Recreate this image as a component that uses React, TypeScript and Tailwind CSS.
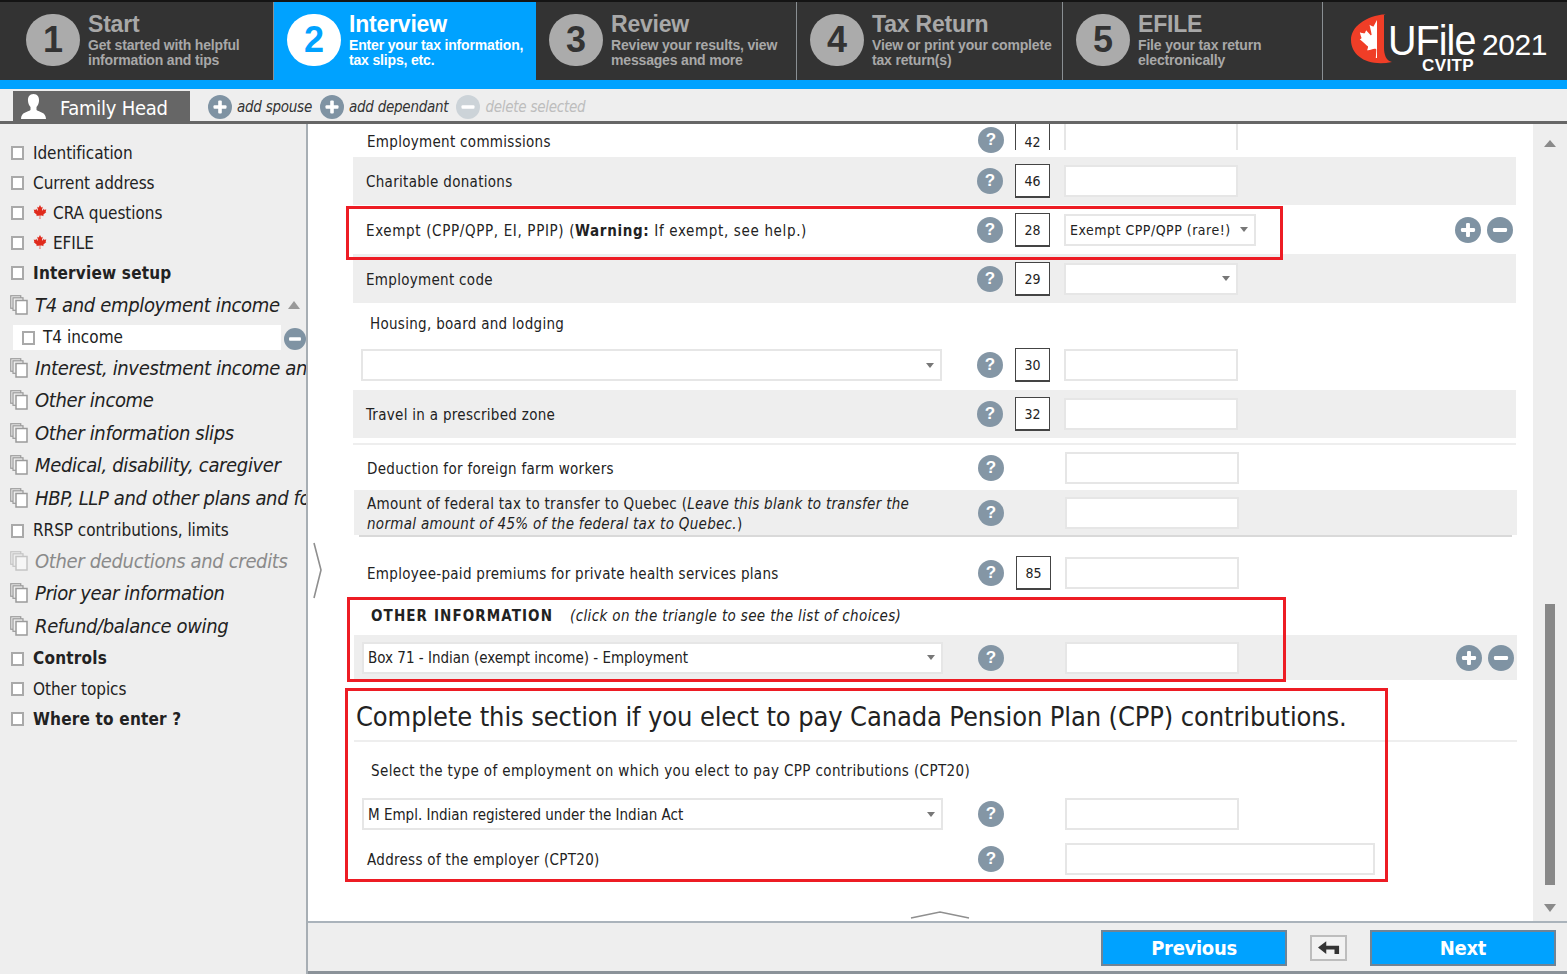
import React from "react";
import { FaCanadianMapleLeaf } from "react-icons/fa";

const FONT = "font-['DejaVu_Sans',sans-serif] [font-stretch:condensed]";

function Help() {
  return (
    <div className="w-[26px] h-[26px] shrink-0 rounded-full bg-[#8496a5] flex items-center justify-center text-white font-bold text-[17px] font-['Liberation_Sans',sans-serif]">
      ?
    </div>
  );
}

function Round({ kind, light, size = "w-[24px] h-[24px]" }: { kind: "plus" | "minus"; light?: boolean; size?: string }) {
  return (
    <svg viewBox="0 0 24 24" className={size + " shrink-0"}>
      <circle cx="12" cy="12" r="12" fill={light ? "#ccd3d8" : "#7f93a3"} />
      <rect x="5.5" y="10.2" width="13" height="3.6" rx="1" fill="#fff" />
      {kind === "plus" && <rect x="10.2" y="5.5" width="3.6" height="13" rx="1" fill="#fff" />}
    </svg>
  );
}

function Caret() {
  return (
    <svg width="8" height="5" viewBox="0 0 8 5" className="shrink-0">
      <path d="M0 0H8L4 5Z" fill="#777" />
    </svg>
  );
}

function Code({ v }: { v: string }) {
  return (
    <div className="w-[35px] h-[34px] shrink-0 bg-white border border-[#444] border-b-2 flex items-center justify-center pt-[2px] text-[14px] text-[#222]">
      {v}
    </div>
  );
}

function Input({ wide }: { wide?: boolean }) {
  return <div className={(wide ? "w-[310px]" : "w-[174px]") + " h-[32px] shrink-0 bg-white border-2 border-[#e6e6e6]"} />;
}

function Select({ text, w, small }: { text?: string; w: string; small?: boolean }) {
  return (
    <div className={w + " h-[32px] shrink-0 bg-white border-2 border-[#e6e6e6] flex items-center justify-between pl-[4px] pr-[6px] whitespace-nowrap text-[#222] " + (small ? "text-[14px] tracking-[0.5px]" : "text-[15px]")}>
      <span className="pt-[2px]">{text}</span>
      <Caret />
    </div>
  );
}

function Row({
  h,
  gray,
  label,
  code,
  field,
  icons,
  track = "tracking-[0.3px]",
}: {
  h: string;
  gray?: boolean;
  label: React.ReactNode;
  code?: string;
  field?: React.ReactNode;
  icons?: boolean;
  track?: string;
}) {
  return (
    <div className={h + " flex items-center " + (gray ? "bg-[#eeeeee]" : "")}>
      <div className={"w-[624px] shrink-0 pl-[13px] pr-[10px] pt-[2px] text-[15px] leading-[20px] text-[#222] " + track}>{label}</div>
      <Help />
      <div className="w-[61px] shrink-0 flex justify-start pl-[12px]">{code ? <Code v={code} /> : null}</div>
      <div>{field ?? <Input />}</div>
      {icons && (
        <div className="ml-auto mr-[3px] flex gap-[6px]">
          <Round kind="plus" size="w-[26px] h-[26px]" />
          <Round kind="minus" size="w-[26px] h-[26px]" />
        </div>
      )}
    </div>
  );
}

function SelectRow({ h, gray, text, code }: { h: string; gray?: boolean; text?: string; code?: string }) {
  return (
    <div className={h + " flex items-center " + (gray ? "bg-[#eeeeee]" : "")}>
      <div className="w-[624px] shrink-0 pl-[8px]">
        <Select text={text} w="w-[581px]" />
      </div>
      <Help />
      <div className="w-[61px] shrink-0 flex justify-start pl-[12px]">{code ? <Code v={code} /> : null}</div>
      <div>
        <Input />
      </div>
    </div>
  );
}

const STEPS = [
  { n: "1", t: "Start", a: "Get started with helpful", b: "information and tips", w: "w-[274px] pl-[26px]" },
  { n: "2", t: "Interview", a: "Enter your tax information,", b: "tax slips, etc.", w: "w-[262px] pl-[13px]", on: true },
  { n: "3", t: "Review", a: "Review your results, view", b: "messages and more", w: "w-[261px] pl-[13px]" },
  { n: "4", t: "Tax Return", a: "View or print your complete", b: "tax return(s)", w: "w-[266px] pl-[13px]" },
  { n: "5", t: "EFILE", a: "File your tax return", b: "electronically", w: "w-[260px] pl-[13px]" },
];

function Step({ s }: { s: (typeof STEPS)[number] }) {
  return (
    <div
      className={
        s.w +
        " h-full shrink-0 flex items-start pt-[12px] gap-[8px] font-['Liberation_Sans',sans-serif] border-r border-[#8a8f93] " +
        (s.on ? "bg-[#00a2ff] text-white border-r-0" : "bg-[#333333] text-[#a8a8a8]")
      }
    >
      <div
        className={
          "w-[54px] h-[52px] shrink-0 rounded-full flex items-center justify-center text-[36px] font-bold " +
          (s.on ? "bg-white text-[#00a2ff]" : "bg-[#ababab] text-[#333333]")
        }
      >
        {s.n}
      </div>
      <div className="min-w-0 whitespace-nowrap -mt-[2px]">
        <div className="text-[23px] leading-[24px] font-bold tracking-[-0.2px]">{s.t}</div>
        <div className="mt-[2px] text-[14px] leading-[15px] font-bold tracking-[-0.17px]">{s.a}</div>
        <div className="text-[14px] leading-[15px] font-bold tracking-[-0.17px]">{s.b}</div>
      </div>
    </div>
  );
}

function Check({ className }: { className?: string }) {
  return <div className={"w-[13px] h-[14px] shrink-0 bg-white border-2 border-[#a9a9a9] " + (className ?? "")} />;
}

function Pages({ faded }: { faded?: boolean }) {
  const c = faded ? "#c4c4c4" : "#9a9a9a";
  return (
    <svg width="18" height="20" viewBox="0 0 18 20" className="shrink-0">
      <rect x="0.75" y="0.75" width="10" height="12.5" fill="#eee" stroke={c} strokeWidth="1.2" />
      <rect x="3" y="2.8" width="10" height="12.5" fill="#eee" stroke={c} strokeWidth="1.2" />
      <rect x="6" y="5.5" width="11" height="13.5" fill={faded ? "#f6f6f6" : "#fff"} stroke={c} strokeWidth="1.5" />
    </svg>
  );
}

type Item = { t: string; h: string; kind: "plain" | "bold" | "leaf" | "ital" | "fade" };
const TOP: Item[] = [
  { t: "Identification", h: "h-[30px]", kind: "plain" },
  { t: "Current address", h: "h-[30px]", kind: "plain" },
  { t: "CRA questions", h: "h-[30px]", kind: "leaf" },
  { t: "EFILE", h: "h-[30px]", kind: "leaf" },
  { t: "Interview setup", h: "h-[30px]", kind: "bold" },
];
const BOTTOM: Item[] = [
  { t: "Interest, investment income and", h: "h-[32px]", kind: "ital" },
  { t: "Other income", h: "h-[32px]", kind: "ital" },
  { t: "Other information slips", h: "h-[33px]", kind: "ital" },
  { t: "Medical, disability, caregiver", h: "h-[32px]", kind: "ital" },
  { t: "HBP, LLP and other plans and forms", h: "h-[33px]", kind: "ital" },
  { t: "RRSP contributions, limits", h: "h-[31px]", kind: "plain" },
  { t: "Other deductions and credits", h: "h-[32px]", kind: "fade" },
  { t: "Prior year information", h: "h-[32px]", kind: "ital" },
  { t: "Refund/balance owing", h: "h-[33px]", kind: "ital" },
  { t: "Controls", h: "h-[31px]", kind: "bold" },
  { t: "Other topics", h: "h-[30px]", kind: "plain" },
  { t: "Where to enter ?", h: "h-[30px]", kind: "bold" },
];

function NavItem({ it }: { it: Item }) {
  if (it.kind === "ital" || it.kind === "fade") {
    return (
      <div className={it.h + " flex items-center pl-[10px] gap-[7px] whitespace-nowrap"}>
        <Pages faded={it.kind === "fade"} />
        <span className={"text-[20px] italic tracking-[-0.35px] " + (it.kind === "fade" ? "text-[#8a8a8a]" : "text-[#222]")}>{it.t}</span>
      </div>
    );
  }
  return (
    <div className={it.h + " flex items-center pl-[11px] whitespace-nowrap text-[#222] text-[17px] " + (it.kind === "bold" ? "font-bold tracking-[0.2px]" : "tracking-[-0.05px]")}>
      <Check className="mr-[9px] mt-[2px]" />
      {it.kind === "leaf" && <FaCanadianMapleLeaf className="mr-[6px] text-[#e02a1c] text-[14px] shrink-0" />}
      <span className="pt-[3px]">{it.t}</span>
    </div>
  );
}

function Logo() {
  return (
    <div className="relative flex-1 h-full bg-[#333333] font-['Liberation_Sans',sans-serif] text-white">
      <svg width="48" height="56" viewBox="0 0 48 56" className="absolute left-[27px] top-[12px]">
        <defs>
          <clipPath id="halfLeaf">
            <rect x="0" y="0" width="27" height="56" />
          </clipPath>
        </defs>
        <path d="M36 0C15 2 1 13 1 26C1 42 18 53 42 48C36 47 34 40 34 34V0Z" fill="#f03e27" />
        <g clipPath="url(#halfLeaf)">
          <g transform="translate(8,6)">
            <FaCanadianMapleLeaf size={38} color="#fff" />
          </g>
        </g>
      </svg>
      <span className="absolute left-[65px] top-[16px] text-[42px] leading-[46px] tracking-[-1px] inline-block origin-left scale-x-[0.94]">UFile</span>
      <span className="absolute left-[159px] top-[26px] text-[30px] leading-[34px] tracking-[-0.4px]">2021</span>
      <span className="absolute left-[99px] top-[54px] text-[17px] leading-[19px] font-bold tracking-[0.4px]">CVITP</span>
    </div>
  );
}

function RedBox({ className }: { className: string }) {
  return <div className={"absolute border-[3px] border-[#ed1c24] pointer-events-none " + className} />;
}

function Toolbtn({ kind, text, light }: { kind: "plus" | "minus"; text: string; light?: boolean }) {
  return (
    <div className="flex items-center gap-[5px]">
      <Round kind={kind} light={light} />
      <span className={"italic text-[15px] tracking-[-0.25px] pt-[1px] " + (light ? "text-[#bdbdbd]" : "text-[#333]")}>{text}</span>
    </div>
  );
}

function BlueBtn({ text }: { text: string }) {
  return (
    <div className="w-[186px] h-[36px] bg-[#00a2ff] border-2 border-[#6f8496] flex items-center justify-center text-white font-bold text-[20px] tracking-[-0.3px]">
      {text}
    </div>
  );
}

export default function App() {
  return (
    <div className={"relative w-[1567px] h-[974px] overflow-hidden bg-white flex flex-col " + FONT}>
      {/* top nav */}
      <div className="h-[2px] bg-[#141414]" />
      <div className="h-[78px] flex bg-[#333333]">
        {STEPS.map((s) => (
          <Step key={s.n} s={s} />
        ))}
        <Logo />
      </div>
      <div className="h-[9px] bg-[#00a2ff]" />

      {/* toolbar */}
      <div className="h-[32px] bg-[#eeeeee] flex items-end pl-[13px]">
        <div className="w-[177px] h-[30px] bg-[#666666] flex items-center pl-[8px] gap-[14px] text-white text-[20px] tracking-[-0.25px]">
          <svg width="25" height="26" viewBox="0 0 25 26">
            <path d="M12.5 1C16.5 1 18.3 4 18 8C17.8 11 16.5 13 15.5 14V17C18 19 25 19 25 26H0C0 19 7 19 9.5 17V14C8.5 13 7.2 11 7 8C6.7 4 8.5 1 12.5 1Z" fill="#fff" />
          </svg>
          <span className="pt-[3px]">Family Head</span>
        </div>
        <div className="h-[30px] flex items-center ml-[18px] gap-[8px] pt-[2px]">
          <Toolbtn kind="plus" text="add spouse" />
          <Toolbtn kind="plus" text="add dependant" />
          <Toolbtn kind="minus" text="delete selected" light />
        </div>
      </div>
      <div className="h-[3px] bg-[#666666]" />

      {/* body */}
      <div className="flex-1 min-h-0 flex">
        <aside className="w-[308px] shrink-0 bg-[#eeeeee] border-r-2 border-[#a7aeb4] overflow-hidden pt-[13px]">
          {TOP.map((it) => (
            <NavItem key={it.t} it={it} />
          ))}
          <div className="h-[36px] flex items-center pl-[10px] gap-[7px] whitespace-nowrap">
            <Pages />
            <span className="text-[20px] italic tracking-[-0.35px] text-[#222]">T4 and employment income</span>
            <svg width="12" height="8" viewBox="0 0 12 8" className="ml-[1px] shrink-0">
              <path d="M0 8H12L6 0Z" fill="#999" />
            </svg>
          </div>
          <div className="h-[29px] flex items-center">
            <div className="ml-[13px] w-[269px] h-[25px] bg-white flex items-center pl-[9px] text-[17px] text-[#222]">
              <Check className="mr-[8px]" />
              T4 income
            </div>
            <div className="ml-[3px] mt-[2px]">
              <Round kind="minus" size="w-[22px] h-[22px]" />
            </div>
          </div>
          {BOTTOM.map((it) => (
            <NavItem key={it.t} it={it} />
          ))}
        </aside>

        <main className="flex-1 min-w-0 flex flex-col">
          <div className="flex-1 min-h-0 flex">
            <div className="flex-1 min-w-0 overflow-hidden">
              {/* upper group */}
              <div className="ml-[45px] w-[1163px]">
                <div className="h-[33px] flex items-start overflow-hidden">
                  <div className="w-[624px] shrink-0 pl-[14px] pt-[9px] text-[15px] leading-[19px] tracking-[0.3px] text-[#222]">Employment commissions</div>
                  <div className="mt-[3px] ml-[1px]">
                    <Help />
                  </div>
                  <div className="ml-[11px] w-[35px] h-[26px] border-x border-[#444] flex items-center justify-center text-[14px] pt-[10px] text-[#222]">42</div>
                  <div className="ml-[14px] w-[174px] h-[26px] border-x-2 border-[#e6e6e6]" />
                </div>
                <Row h="h-[48px]" gray label="Charitable donations" code="46" />
                <Row
                  h="h-[49px]"
                  track="tracking-[0.65px]"
                  label={
                    <>
                      Exempt (CPP/QPP, EI, PPIP) (<b>Warning:</b> If exempt, see help.)
                    </>
                  }
                  code="28"
                  field={<Select text="Exempt CPP/QPP (rare!)" w="w-[192px]" small />}
                  icons
                />
                <Row h="h-[49px]" gray label="Employment code" code="29" field={<Select w="w-[174px]" />} />
                <div className="h-[41px] flex items-center pl-[17px] pt-[2px] text-[15px] tracking-[0.3px] text-[#222]">Housing, board and lodging</div>
                <SelectRow h="h-[42px]" code="30" />
                <div className="mt-[4px]">
                  <Row h="h-[48px]" gray label="Travel in a prescribed zone" code="32" />
                </div>
                <div className="h-[5px]" />
                <div className="h-[2px] bg-[#eeeeee]" />
              </div>

              {/* lower group */}
              <div className="ml-[46px] w-[1163px]">
                <Row h="h-[45px]" label="Deduction for foreign farm workers" />
                <Row
                  h="h-[45px]"
                  gray
                  label={
                    <>
                      Amount of federal tax to transfer to Quebec (<i>Leave this blank to transfer the</i>
                      <br />
                      <i>normal amount of 45% of the federal tax to Quebec.</i>)
                    </>
                  }
                />
                <div className="ml-[5px] mr-[5px] h-[2px] bg-[#d9d9d9]" />
                <div className="h-[13px]" />
                <Row h="h-[45px]" label="Employee-paid premiums for private health services plans" code="85" />
                <div className="h-[40px] flex items-center pl-[17px] pt-[2px] text-[15px] tracking-[0.36px] text-[#222] whitespace-nowrap">
                  <b className="mr-[17px] tracking-[1.1px]">OTHER INFORMATION</b>
                  <i>(click on the triangle to see the list of choices)</i>
                </div>
                <div className="relative">
                  <SelectRow h="h-[45px]" gray text="Box 71 - Indian (exempt income) - Employment" />
                  <div className="absolute right-[3px] top-[10px] flex gap-[6px]">
                    <Round kind="plus" size="w-[26px] h-[26px]" />
                    <Round kind="minus" size="w-[26px] h-[26px]" />
                  </div>
                </div>
                <div className="h-[60px] pt-[14px] flex items-center pl-[2px] text-[27px] tracking-[-0.12px] text-[#222] whitespace-nowrap">
                  Complete this section if you elect to pay Canada Pension Plan (CPP) contributions.
                </div>
                <div className="h-[2px] bg-[#eeeeee]" />
                <div className="h-[50px] pt-[9px] flex items-center pl-[17px] text-[15px] tracking-[0.38px] text-[#222] whitespace-nowrap">
                  Select the type of employment on which you elect to pay CPP contributions (CPT20)
                </div>
                <SelectRow h="h-[44px]" text="M Empl. Indian registered under the Indian Act" />
                <Row h="h-[46px]" label="Address of the employer (CPT20)" field={<Input wide />} />
              </div>
            </div>

            {/* scrollbar */}
            <div className="w-[34px] shrink-0 bg-[#eeeeee] flex flex-col items-center pt-[16px] pb-[9px]">
              <svg width="12" height="7" viewBox="0 0 12 7" className="shrink-0">
                <path d="M0 7H12L6 0Z" fill="#8a8a8a" />
              </svg>
              <div className="mt-[457px] w-[10px] h-[281px] bg-[#888888]" />
              <svg width="12" height="8" viewBox="0 0 12 8" className="mt-auto shrink-0">
                <path d="M0 0H12L6 8Z" fill="#8a8a8a" />
              </svg>
            </div>
          </div>

          {/* footer */}
          <div className="h-[2px] bg-[#aab3bb]" />
          <div className="h-[48px] bg-[#eeeeee] flex items-center pl-[793px] pt-[2px]">
            <BlueBtn text="Previous" />
            <div className="ml-[23px] mr-[23px] w-[37px] h-[26px] border-2 border-[#bdbdbd] bg-[#f2f2f2] flex items-center justify-center">
              <svg width="22" height="15" viewBox="0 0 24 16">
                <path d="M9 0V5H23V14H18V9H9V14L0 7Z" fill="#333" />
              </svg>
            </div>
            <BlueBtn text="Next" />
          </div>
          <div className="h-[3px] bg-[#8b9299]" />
        </main>
      </div>

      {/* overlays: annotations and collapse handles */}
      <RedBox className="left-[346px] top-[206px] w-[937px] h-[54px]" />
      <RedBox className="left-[347px] top-[597px] w-[939px] h-[85px]" />
      <RedBox className="left-[345px] top-[688px] w-[1043px] h-[194px]" />
      <svg width="10" height="58" viewBox="0 0 10 58" className="absolute left-[313px] top-[542px]">
        <path d="M1 1L8 28L1 56" fill="none" stroke="#8f8f8f" strokeWidth="1.6" />
      </svg>
      <svg width="60" height="10" viewBox="0 0 60 10" className="absolute left-[910px] top-[910px]">
        <path d="M1 8L30 2L59 8" fill="none" stroke="#8f8f8f" strokeWidth="1.6" />
      </svg>
    </div>
  );
}
